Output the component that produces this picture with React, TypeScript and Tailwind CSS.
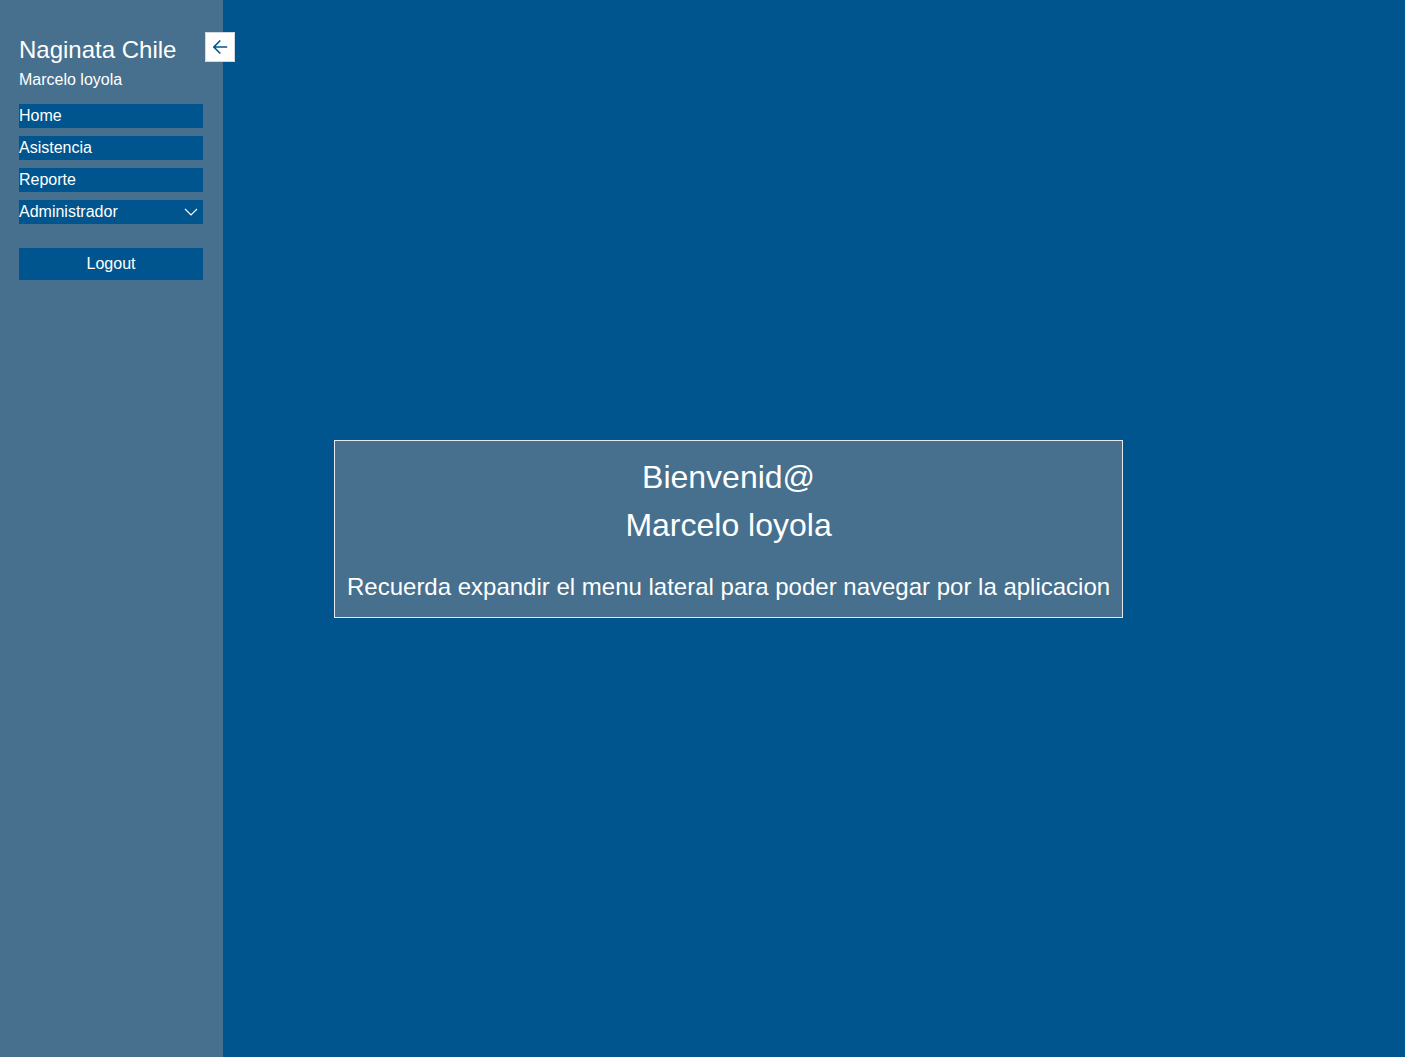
import React from "react";

export default function App() {
  const items = ["Home", "Asistencia", "Reporte"];
  return (
    <div className="flex h-[1057px] w-[1405px] overflow-hidden bg-[#00558e] font-['Liberation_Sans',Arial,sans-serif] text-white">
      <aside className="relative flex w-[223px] shrink-0 flex-col bg-[#46708d] pl-[19px] pr-[20px] pt-[36px]">
        <h1 className="text-[24px] leading-[28px]">Naginata Chile</h1>
        <div className="mt-[7px] text-[16px] leading-[18px]">Marcelo loyola</div>
        <nav className="mt-[15px] flex flex-col gap-2">
          {items.map((t) => (
            <a key={t} className="flex h-6 items-center bg-[#00558e] text-[16px] leading-[18px]">
              {t}
            </a>
          ))}
          <a className="flex h-6 items-center justify-between bg-[#00558e] pr-[5px] text-[16px] leading-[18px]">
            <span>Administrador</span>
            <svg width="14" height="8" viewBox="0 0 14 8" fill="none" stroke="white" strokeWidth="1.1">
              <path d="M1 1l6 6 6-6" />
            </svg>
          </a>
        </nav>
        <button className="mt-6 flex h-8 items-center justify-center bg-[#00558e] text-[16px] leading-[18px] text-white">
          Logout
        </button>
        <button className="absolute left-[205px] top-[32px] flex h-[30px] w-[30px] items-center justify-center border border-[#d0d8e0] bg-white">
          <svg width="16" height="16" viewBox="0 0 16 16" fill="none" stroke="#00558e" strokeWidth="1.7" strokeLinecap="round" strokeLinejoin="round">
            <path d="M14.5 8H1.8M7.8 2L1.8 8l6 6" />
          </svg>
        </button>
      </aside>
      <main className="flex flex-1 items-center pl-[111px]">
        <div className="border border-[#e6eaee] bg-[#46708d] px-[12px] pb-[16px] pt-[18px] text-center">
          <div className="text-[32px] leading-[37px]">Bienvenid@</div>
          <div className="mt-[11px] text-[32px] leading-[37px]">Marcelo loyola</div>
          <p className="mt-[29px] text-[24px] leading-[28px]">
            Recuerda expandir el menu lateral para poder navegar por la aplicacion
          </p>
        </div>
      </main>
    </div>
  );
}
